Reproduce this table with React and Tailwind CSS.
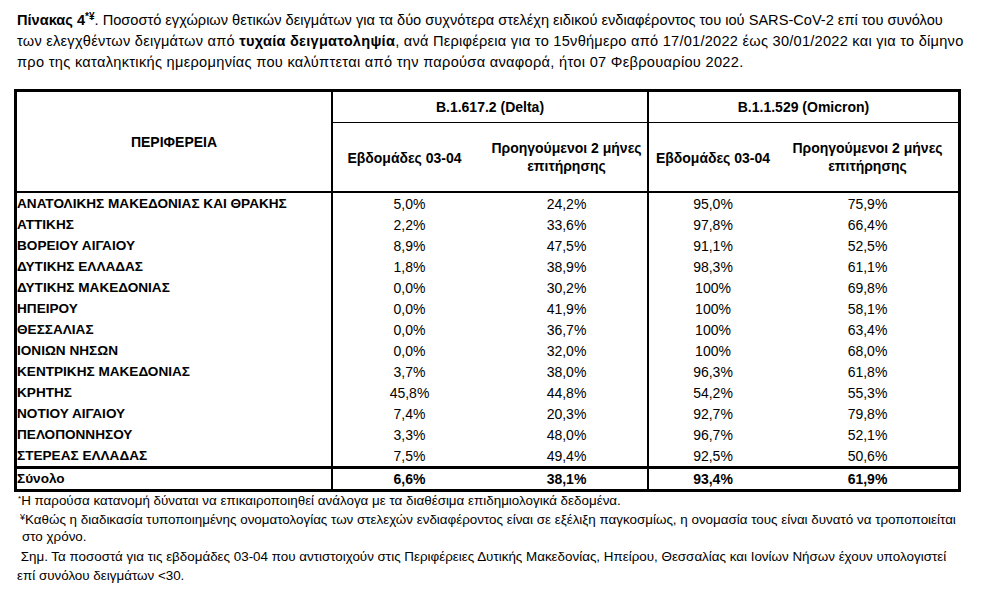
import React from "react";

const rows = [
  ["ΑΝΑΤΟΛΙΚΗΣ ΜΑΚΕΔΟΝΙΑΣ ΚΑΙ ΘΡΑΚΗΣ", "5,0%", "24,2%", "95,0%", "75,9%"],
  ["ΑΤΤΙΚΗΣ", "2,2%", "33,6%", "97,8%", "66,4%"],
  ["ΒΟΡΕΙΟΥ ΑΙΓΑΙΟΥ", "8,9%", "47,5%", "91,1%", "52,5%"],
  ["ΔΥΤΙΚΗΣ ΕΛΛΑΔΑΣ", "1,8%", "38,9%", "98,3%", "61,1%"],
  ["ΔΥΤΙΚΗΣ ΜΑΚΕΔΟΝΙΑΣ", "0,0%", "30,2%", "100%", "69,8%"],
  ["ΗΠΕΙΡΟΥ", "0,0%", "41,9%", "100%", "58,1%"],
  ["ΘΕΣΣΑΛΙΑΣ", "0,0%", "36,7%", "100%", "63,4%"],
  ["ΙΟΝΙΩΝ ΝΗΣΩΝ", "0,0%", "32,0%", "100%", "68,0%"],
  ["ΚΕΝΤΡΙΚΗΣ ΜΑΚΕΔΟΝΙΑΣ", "3,7%", "38,0%", "96,3%", "61,8%"],
  ["ΚΡΗΤΗΣ", "45,8%", "44,8%", "54,2%", "55,3%"],
  ["ΝΟΤΙΟΥ ΑΙΓΑΙΟΥ", "7,4%", "20,3%", "92,7%", "79,8%"],
  ["ΠΕΛΟΠΟΝΝΗΣΟΥ", "3,3%", "48,0%", "96,7%", "52,1%"],
  ["ΣΤΕΡΕΑΣ ΕΛΛΑΔΑΣ", "7,5%", "49,4%", "92,5%", "50,6%"],
];

function Row({ r, bold, h }) {
  return (
    <div className={`flex ${h} items-center ${bold ? "font-bold" : ""}`}>
      <div className="w-[316px] h-full border-r-2 border-black flex items-center font-bold text-[13.6px]">{r[0]}</div>
      <div className="w-[153px] text-center">{r[1]}</div>
      <div className="w-[163px] h-full border-r-2 border-black flex items-center justify-center">{r[2]}</div>
      <div className="w-[128px] text-center">{r[3]}</div>
      <div className="flex-1 text-center">{r[4]}</div>
    </div>
  );
}

export default function App() {
  return (
    <div className="w-[992px] h-[613px] bg-white text-black overflow-hidden" style={{ fontFamily: '"Liberation Sans", Arial, sans-serif' }}>
      <p className="pt-[10px] pl-[17px] text-[14.6px] leading-[21px] whitespace-nowrap">
        <b>Πίνακας 4<sup className="text-[10px] leading-none">*¥</sup></b>. Ποσοστό εγχώριων θετικών δειγμάτων για τα δύο συχνότερα στελέχη ειδικού ενδιαφέροντος του ιού SARS-CoV-2 επί του συνόλου<br />
        <span className="tracking-[0.25px]">των ελεγχθέντων δειγμάτων από <b>τυχαία δειγματοληψία</b>, ανά Περιφέρεια για το 15νθήμερο από 17/01/2022 έως 30/01/2022 και για το δίμηνο</span><br />
        <span className="tracking-[0.3px]">προ της καταληκτικής ημερομηνίας που καλύπτεται από την παρούσα αναφορά, ήτοι 07 Φεβρουαρίου 2022.</span>
      </p>

      <div className="mt-[16px] ml-[14px] w-[947px] border-[3px] border-black text-[14px] leading-[18px]">
        <div className="flex h-[101px] border-b-2 border-black font-bold">
          <div className="w-[316px] border-r-2 border-black flex items-center justify-center">ΠΕΡΙΦΕΡΕΙΑ</div>
          <div className="w-[316px] border-r-2 border-black flex flex-col">
            <div className="h-[31px] border-b border-black flex items-center justify-center">B.1.617.2 (Delta)</div>
            <div className="flex flex-1 items-center">
              <div className="w-[153px] text-center pt-[2px] pr-[10px]">Εβδομάδες 03-04</div>
              <div className="flex-1 text-center">Προηγούμενοι 2 μήνες<br />επιτήρησης</div>
            </div>
          </div>
          <div className="flex-1 flex flex-col">
            <div className="h-[31px] border-b border-black flex items-center justify-center">B.1.1.529 (Omicron)</div>
            <div className="flex flex-1 items-center">
              <div className="w-[128px] text-center pt-[2px]">Εβδομάδες 03-04</div>
              <div className="flex-1 text-center">Προηγούμενοι 2 μήνες<br />επιτήρησης</div>
            </div>
          </div>
        </div>
        {rows.map((r) => (
          <Row key={r[0]} r={r} h="h-[21px]" />
        ))}
        <div className="border-t-[3px] border-black">
          <Row r={["Σύνολο", "6,6%", "38,1%", "93,4%", "61,9%"]} bold h="h-[20px]" />
        </div>
      </div>

      <div className="text-[13.4px] leading-[18px] whitespace-nowrap">
        <p className="pl-[18px]"><sup className="text-[8px] leading-none">*</sup>Η παρούσα κατανομή δύναται να επικαιροποιηθεί ανάλογα με τα διαθέσιμα επιδημιολογικά δεδομένα.</p>
        <p className="pl-[20px] leading-[17px] mt-[1px]"><sup className="text-[9px] leading-none">¥</sup>Καθώς η διαδικασία τυποποιημένης ονοματολογίας των στελεχών ενδιαφέροντος είναι σε εξέλιξη παγκοσμίως, η ονομασία τους είναι δυνατό να τροποποιείται<br />
          <span className="pl-[2px]">στο χρόνο.</span>
        </p>
        <p className="pl-[17px] mt-[2px] leading-[19px]">
          &nbsp;Σημ. Τα ποσοστά για τις εβδομάδες 03-04 που αντιστοιχούν στις Περιφέρειες Δυτικής Μακεδονίας, Ηπείρου, Θεσσαλίας και Ιονίων Νήσων έχουν υπολογιστεί<br />
          επί συνόλου δειγμάτων &lt;30.
        </p>
      </div>
    </div>
  );
}
